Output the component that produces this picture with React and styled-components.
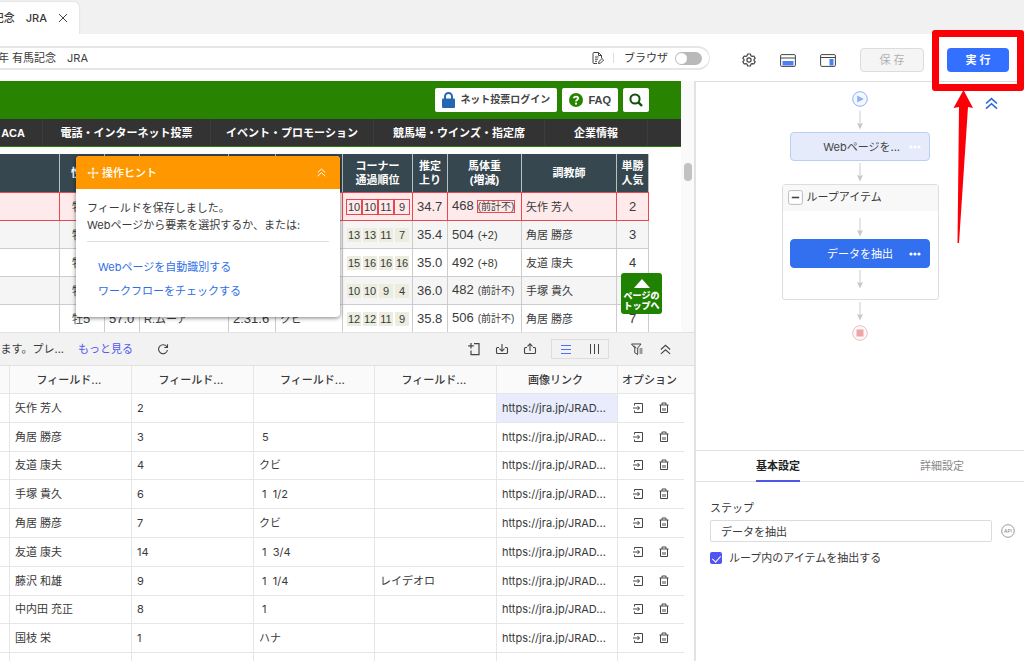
import React from 'react';
import styled, { createGlobalStyle, css } from 'styled-components';

const Global = createGlobalStyle`
  * { box-sizing: border-box; }
  body {
    margin: 0;
    background: #fff;
    color: #3a3a3a;
    font: 11px/16px Inter, "Noto Sans CJK JP", sans-serif;
    overflow: hidden;
  }
  button, input { font: inherit; color: inherit; }
`;

const Page = styled.div`
  display: flex;
  flex-direction: column;
  height: 100vh;
  position: relative;
  overflow: hidden;
`;

/* ---------- top tab strip and toolbar ---------- */
const TabStrip = styled.header`
  display: flex;
  align-items: flex-end;
  height: 34px;
  flex: none;
  background: #f1f1f1;
`;
const PageTab = styled.div`
  display: flex;
  align-items: center;
  height: 32px;
  padding-right: 10px;
  gap: 10px;
  background: #fff;
  border-radius: 0 5px 0 0;
  box-shadow: 0 0 2px #ccc;
  font-weight: 500;
`;
const Clipped = styled.span`
  display: flex;
  justify-content: flex-end;
  flex: none;
  width: ${(p) => p.$w}px;
  overflow: hidden;
  white-space: pre;
`;
const IconButton = styled.button`
  display: inline-flex;
  align-items: center;
  justify-content: center;
  flex: none;
  width: ${(p) => p.$w || 14}px;
  height: 16px;
  padding: 0;
  border: 0;
  background: none;
  color: ${(p) => p.$color || '#444'};
`;
const Toolbar = styled.div`
  display: flex;
  align-items: center;
  flex: none;
  height: 47px;
  padding: 5px 15px 0 0;
  background: #fff;
  position: relative;
`;
const AddressBar = styled.div`
  display: flex;
  align-items: center;
  flex: 1;
  height: 24px;
  margin-bottom: 4px;
  padding-right: 7px;
  border: solid #e6e6e6;
  border-width: 2px 1px 2px 0;
  border-radius: 0 12px 12px 0;
`;
const Push = styled.span`
  flex: 1;
`;
const Rule = styled.span`
  width: 1px;
  height: 10px;
  margin: 0 10px 0 8px;
  background: #ddd;
`;
const ToggleLabel = styled.label`
  display: flex;
  align-items: center;
  gap: 7px;
`;
const Toggle = styled.input.attrs({ type: 'checkbox' })`
  appearance: none;
  width: 27px;
  height: 13px;
  margin: 0;
  border-radius: 7px;
  background: #b9b9b9;
  &::after {
    content: '';
    display: block;
    width: 11px;
    height: 11px;
    margin: 1px;
    border-radius: 50%;
    background: #fff;
  }
`;
const ToolIcons = styled.div`
  display: flex;
  align-items: center;
  gap: 24px;
  padding: 0 24px 0 32px;
`;
const ActionButton = styled.button`
  width: ${(p) => (p.$primary ? 62 : 64)}px;
  height: 24px;
  padding: 0;
  border-radius: 4px;
  white-space: pre;
  ${(p) => (p.$primary
    ? css`
        margin-left: 23px;
        border: 0;
        background: #3370ff;
        color: #fff;
        font-weight: 600;
      `
    : css`
        border: 1px solid #dcdcdc;
        background: #f5f5f5;
        color: #b0b0b0;
      `)}
`;

/* ---------- body ---------- */
const Body = styled.main`
  display: grid;
  grid-template-columns: minmax(0, 1fr) 328px;
  flex: 1;
  min-height: 0;
`;
const Left = styled.div`
  display: flex;
  flex-direction: column;
  min-width: 0;
  border-right: 2px solid #e2e2e2;
`;

const Browser = styled.section`
  display: flex;
  flex: none;
  height: 251px;
  position: relative;
  overflow: hidden;
  font-family: "Liberation Sans", "Noto Sans CJK JP", sans-serif;
`;
const Site = styled.div`
  flex: 1;
  min-width: 0;
`;
const ScrollTrack = styled.div`
  width: 13px;
  padding: 82px 2px 0 3px;
  background: #fafafa;
`;
const ScrollThumb = styled.div`
  height: 18px;
  border-radius: 4px;
  background: #c2c2c2;
`;
const SiteHeader = styled.div`
  display: flex;
  align-items: center;
  justify-content: flex-end;
  gap: 5px;
  height: 38px;
  padding-right: 32px;
  background: #278300;
`;
const SiteButton = styled.button`
  display: flex;
  align-items: center;
  gap: 5px;
  height: 24px;
  padding: 0 ${(p) => p.$pad || 7}px;
  border: 0;
  border-radius: 2px;
  background: #fff;
  color: #444;
  font-size: ${(p) => p.$size || 11}px;
  font-weight: 700;
`;
const SiteNav = styled.nav`
  display: flex;
  height: 28px;
  border-bottom: 1px solid #278300;
  background: #333;
`;
const NavLink = styled.a`
  display: flex;
  align-items: center;
  justify-content: ${(p) => (p.$end ? 'flex-end' : 'center')};
  width: ${(p) => p.$w}px;
  padding-right: ${(p) => (p.$end ? 17 : 0)}px;
  overflow: hidden;
  border-right: 1px solid #3c3c3c;
  color: #fff;
  font-weight: 700;
  text-decoration: none;
  white-space: nowrap;
`;
const RaceTable = styled.table`
  width: 649px;
  margin-top: 7px;
  table-layout: fixed;
  border-collapse: separate;
  border-spacing: 0;
  th {
    height: 38px;
    padding: 0;
    border-right: 1px solid #b8c0c4;
    background: #36474f;
    color: #fff;
    line-height: 14px;
  }
`;
const RaceRow = styled.tr`
  height: ${(p) => (p.$hot ? 29 : 28)}px;
  background: ${(p) => (p.$hot ? '#feeaea' : p.$odd ? '#f5f5f5' : '#fff')};
  td {
    padding: 0 0 0 4px;
    border-right: 1px solid ${(p) => (p.$hot ? '#e8474f' : '#ccc')};
    border-bottom: 1px solid ${(p) => (p.$hot ? '#e8474f' : '#ccc')};
    ${(p) => p.$hot && 'border-top: 1px solid #e8474f;'}
    white-space: nowrap;
    overflow: hidden;
  }
`;
const Num = styled.span`
  font-size: 13px;
`;
const Diff = styled.span`
  font-size: ${(p) => (p.$small ? 10 : 11)}px;
  margin-left: 4px;
  ${(p) => p.$hot && 'outline: 1px solid #e8474f;'}
`;
const SexAge = styled.div`
  padding-left: 8px;
`;
const Centered = styled.div`
  text-align: center;
  padding-right: 4px;
`;
const Corners = styled.div`
  display: grid;
  grid-template-columns: repeat(4, 14px);
  gap: 2px;
`;
const Corner = styled.span`
  height: 14px;
  line-height: 14px;
  text-align: center;
  ${(p) => (p.$hot ? 'outline: 1px solid #e8474f;' : 'background: #ececdf;')}
`;
const TopButton = styled.button`
  display: flex;
  flex-direction: column;
  align-items: center;
  gap: 3px;
  position: absolute;
  right: 32px;
  top: 192px;
  width: 41px;
  height: 41px;
  padding: 6px 0 0;
  border: 0;
  border-radius: 3px;
  background: #1f8200;
  color: #fff;
  font-size: 9px;
  font-weight: 900;
  line-height: 10px;
  white-space: nowrap;
`;

/* ---------- hint popup ---------- */
const Hint = styled.aside`
  position: absolute;
  left: 76px;
  top: 75px;
  width: 264px;
  height: 161px;
  border-radius: 4px;
  overflow: hidden;
  background: #fff;
  box-shadow: 0 1px 4px rgba(0, 0, 0, 0.5);
  font-family: Inter, "Noto Sans CJK JP", sans-serif;
`;
const HintHead = styled.div`
  display: flex;
  align-items: center;
  gap: 3px;
  height: 33px;
  padding: 0 12px 0 11px;
  background: #ff9800;
  color: #fff;
  font-weight: 500;
`;
const HintBody = styled.div`
  padding: 11px 11px 0;
  line-height: 17px;
  white-space: nowrap;
  p { margin: 0; }
`;
const HintLinks = styled.div`
  display: flex;
  flex-direction: column;
  gap: 8px;
  margin-top: 7px;
  padding: 17px 11px 0;
  border-top: 1px solid #ddd;
  line-height: 16px;
`;
const Link = styled.a`
  color: ${(p) => p.$color || '#2f6fe4'};
  text-decoration: none;
`;

/* ---------- extracted data ---------- */
const DataBar = styled.div`
  display: flex;
  align-items: center;
  flex: none;
  height: 34px;
  padding: 0 22px 0 0;
  border: solid #e2e2e2;
  border-width: 1px 0;
  background: #f2f2f2;
`;
const BarTools = styled.div`
  display: flex;
  align-items: center;
  gap: 14px;
`;
const Reload = styled(IconButton)`
  margin-left: 24px;
`;
const Segment = styled.div`
  display: flex;
  align-items: center;
  justify-content: space-around;
  width: 58px;
  height: 20px;
  margin-right: 7px;
  border: 1px solid #ddd;
`;
const DataWrap = styled.div`
  flex: 1;
  min-height: 0;
  overflow: hidden;
`;
const DataTable = styled.table`
  width: 100%;
  height: 316px;
  table-layout: fixed;
  border-collapse: separate;
  border-spacing: 0;
  th, td {
    height: 28px;
    padding: 0 0 0 5px;
    border-bottom: 1px solid #e6e6e6;
    border-right: 1px solid #e6e6e6;
    text-align: left;
    white-space: pre;
    overflow: hidden;
  }
  th {
    padding: 0 3px 0 0;
    background: #fafafa;
    font-weight: 500;
    text-align: center;
  }
  th:nth-child(n + 7), td:nth-child(n + 7) { border-right: 0; }
  td:nth-child(8) { border-bottom: 0; }
`;
const LinkCell = styled.td`
  background: ${(p) => (p.$on ? '#e8ecfd' : 'transparent')};
`;
const RowTools = styled.div`
  display: flex;
  gap: 12px;
  padding-left: 8px;
`;

/* ---------- right side: workflow ---------- */
const Right = styled.div`
  display: flex;
  flex-direction: column;
  min-width: 0;
  border-top: 1px solid #ddd;
`;
const Flow = styled.section`
  display: flex;
  flex-direction: column;
  align-items: center;
  flex: none;
  gap: 2px;
  height: 368px;
  padding-top: 9px;
  position: relative;
`;
const FlowEnd = styled.div`
  display: flex;
  margin: ${(p) => (p.$start ? '0 0 2px' : '2px 0 0')};
`;
const FoldButton = styled(IconButton)`
  position: absolute;
  top: 13px;
  right: 26px;
`;
const Node = styled.button`
  display: flex;
  align-items: center;
  justify-content: flex-end;
  flex: none;
  width: 140px;
  height: 29px;
  padding: 0 8px;
  border: 1px solid ${(p) => (p.$active ? '#3370f0' : '#b9d0f5')};
  border-radius: 4px;
  background: ${(p) => (p.$active ? '#3370f0' : '#e6ebfc')};
  color: ${(p) => (p.$active ? '#fff' : '#444')};
  gap: ${(p) => (p.$active ? 16 : 9)}px;
`;
const Loop = styled.div`
  display: flex;
  flex-direction: column;
  align-items: center;
  gap: 2px;
  flex: none;
  width: 157px;
  height: 116px;
  border: 1px solid #ddd;
  border-radius: 3px;
`;
const LoopHead = styled.div`
  display: flex;
  align-items: center;
  align-self: stretch;
  gap: 4px;
  height: 26px;
  margin-bottom: 5px;
  padding: 0 0 2px 5px;
  background: #f8f8f8;
`;

/* ---------- right side: settings ---------- */
const SettingTabs = styled.div`
  display: grid;
  grid-template-columns: 1fr 1fr;
  justify-items: center;
  flex: none;
  height: 32px;
  border: solid #e2e2e2;
  border-width: 1px 0;
`;
const SettingTab = styled.button`
  height: 31px;
  padding: 0;
  border: 0;
  border-bottom: 2px solid ${(p) => (p.$on ? '#4f55e8' : 'transparent')};
  background: none;
  color: ${(p) => (p.$on ? '#222' : '#888')};
  font-weight: ${(p) => (p.$on ? 600 : 400)};
`;
const Form = styled.form`
  display: flex;
  flex-direction: column;
  padding: 18px 9px 0 14px;
`;
const Field = styled.div`
  display: flex;
  align-items: center;
  gap: 9px;
  margin: 4px 0 8px;
`;
const TextBox = styled.input`
  flex: 1;
  min-width: 0;
  height: 22px;
  padding: 0 10px;
  border: 1px solid #dcdcdc;
  border-radius: 2px;
  background: #fff;
`;
const CheckLabel = styled.label`
  display: flex;
  align-items: center;
  gap: 7px;
`;
const CheckBox = styled.input.attrs({ type: 'checkbox' })`
  appearance: none;
  display: flex;
  justify-content: center;
  width: 12px;
  height: 12px;
  margin: 0;
  border-radius: 2px;
  background: #4f55ee;
  &::after {
    content: '';
    width: 4px;
    height: 7px;
    margin-top: 2px;
    border: solid #fff;
    border-width: 0 1px 1px 0;
    transform: rotate(42deg);
  }
`;

/* ---------- red annotation ---------- */
const Marker = styled.div`
  position: absolute;
  top: 30px;
  right: 0;
  width: 92px;
  height: 61px;
  border: 7px solid #fb0007;
  border-radius: 3px;
  pointer-events: none;
`;
const MarkerArrow = styled.svg`
  position: absolute;
  top: 90px;
  right: 50px;
`;

/* ---------- icons ---------- */
const Svg = ({ w = 14, h = w, sw = 1, children, ...rest }) => (
  <svg width={w} height={h} viewBox={`0 0 ${w} ${h}`} fill="none" stroke="currentColor" strokeWidth={sw} aria-hidden="true" {...rest}>
    {children}
  </svg>
);
const CloseIcon = () => <Svg w={12}><path d="M2 2l8 8M10 2l-8 8" /></Svg>;
const NoteIcon = () => (
  <Svg w={14}>
    <path d="M6 12.5H3a1 1 0 0 1-1-1v-9a1 1 0 0 1 1-1h4.500l3 3V7M7.500 1.500v3h3M4 6h3.500M4 8.200h3M4 10.300h2M7.500 12.500l.4-1.900L11 7.500l1.600 1.500-3.100 3.100z" />
  </Svg>
);
const GearIcon = () => (
  <Svg w={14} sw={1.2}>
    <path d="M5.600 1h2.800l.5 1.700 1.200.7 1.700-.4L13.200 5.400 12 6.500v1.100l1.200 1.100-1.400 2.300-1.700-.4-1.200.7L8.400 13H5.600l-.5-1.700-1.200-.7-1.700.4L.8 8.700 2 7.600V6.500L.8 5.400 2.200 3l1.700.4 1.200-.7z" strokeLinejoin="round" />
    <circle cx="7" cy="7" r="2.100" />
  </Svg>
);
const PaneBottom = () => (
  <Svg w={16} h={13}>
    <rect x=".6" y=".6" width="14.800" height="11.800" rx="1.200" />
    <path d="M1 4h14" />
    <path d="M2.500 7h11v4.500h-11z" fill="#4a80f5" stroke="none" />
  </Svg>
);
const PaneRight = () => (
  <Svg w={16} h={13}>
    <rect x=".6" y=".6" width="14.800" height="11.800" rx="1.200" />
    <path d="M1 3.500h14" />
    <path d="M9.500 5h4v6.500h-4z" fill="#4a80f5" stroke="none" />
  </Svg>
);
const UpUp = ({ w = 10, sw = 1.1 }) => (
  <svg width={w} height={w} viewBox="0 0 10 10" fill="none" stroke="currentColor" strokeWidth={sw} aria-hidden="true">
    <path d="M.8 5L5 1.200 9.200 5M.8 9L5 5.200 9.200 9" />
  </svg>
);
const MoveIcon = () => (
  <Svg w={12}>
    <path d="M6 1.500v9M1.500 6h9" />
    <path d="M6 .3l1.600 2H4.400zM6 11.700l1.600-2H4.400zM.3 6l2-1.600v3.200zM11.700 6l-2-1.600v3.200z" fill="currentColor" stroke="none" />
  </Svg>
);
const LockIcon = () => (
  <Svg w={13} h={16} sw={2}>
    <path d="M3 8V4.500a3.500 3.500 0 0 1 7 0V8" stroke="#2468b4" />
    <rect x="0" y="6.500" width="13" height="9.500" rx="1" fill="#2468b4" stroke="none" />
  </Svg>
);
const HelpIcon = () => (
  <Svg w={14}>
    <circle cx="7" cy="7" r="7" fill="#278300" stroke="none" />
    <path d="M4.800 5.300C4.900 3 9.300 3 9.200 5.400 9.100 6.800 7 6.800 7 8.500" stroke="#fff" strokeWidth="1.800" />
    <circle cx="7" cy="10.700" r="1.100" fill="#fff" stroke="none" />
  </Svg>
);
const SearchIcon = () => (
  <Svg w={14} sw={2}><circle cx="6" cy="6" r="4.600" stroke="#14520a" /><path d="M9.200 9.200l3.800 3.800" stroke="#14520a" strokeWidth="2.400" /></Svg>
);
const RefreshIcon = () => (
  <Svg w={12} sw={1.100}><path d="M10 4A4.500 4.500 0 1 0 10.500 7M10.500 1.200V4.500H7.300" /></Svg>
);
const AddFileIcon = () => (
  <Svg w={14} sw={1.200}><path d="M7 1.700H12v11H4V8.500M4 1v5.500M1.200 3.800h5.600" /></Svg>
);
const TrayIcon = ({ up }) => (
  <Svg w={14} sw={1.100}>
    <path d="M4 5.500H2.500a1 1 0 0 0-1 1v4a1 1 0 0 0 1 1h9a1 1 0 0 0 1-1v-4a1 1 0 0 0-1-1H10M7 2v7" />
    <path d={up ? 'M4.500 4.300L7 1.800l2.500 2.500' : 'M4.500 6.700L7 9.200l2.500-2.500'} />
  </Svg>
);
const FilterIcon = () => (
  <Svg w={14}><path d="M1.500 2h9.500L7.700 6v6.500L4.800 10.800V6zM4 3.500l2.300 2.800M9.500 7h3M9.500 9h3M9.500 11h3" /></Svg>
);
const RowsIcon = () => <Svg w={12}><path d="M1 2.500h10M1 6.500h10M1 10.500h10" /></Svg>;
const ColsIcon = () => <Svg w={12}><path d="M2.500 1v10M6.500 1v10M10.500 1v10" /></Svg>;
const EnterIcon = () => (
  <Svg w={12}><path d="M2.500 3.500v-2h8v9h-8v-2M1 6h6.500M5.500 4l2 2-2 2" /></Svg>
);
const TrashIcon = () => (
  <Svg w={10} h={12}><path d="M.5 3h9M3 2.800V1h4v1.800M1.500 3v7.500h7V3M4 6V9M6 6V9" /></Svg>
);
const Dots = () => (
  <Svg w={12} h={4}><g fill="#fff" stroke="none"><circle cx="2" cy="2" r="1.600" /><circle cx="6" cy="2" r="1.600" /><circle cx="10" cy="2" r="1.600" /></g></Svg>
);
const FlowArrow = () => (
  <Svg w={8} h={19}>
    <path d="M4 0v14" stroke="#ccc" /><path d="M1 12l3 1 3-1-3 6.500z" fill="#c8c8c8" stroke="none" />
  </Svg>
);
const StartIcon = () => (
  <Svg w={16}><circle cx="8" cy="8" r="7.300" stroke="#8fb1f5" fill="#f3f7ff" /><path d="M5.200 4.500L11.800 8l-6.600 3.500z" fill="#8fb1f5" stroke="none" /></Svg>
);
const StopIcon = () => (
  <Svg w={16}><circle cx="8" cy="8" r="7.300" stroke="#eebcbc" fill="#fff8f8" /><path d="M4.500 4.500h7v7h-7z" fill="#eda5a5" stroke="none" /></Svg>
);
const MinusBox = () => (
  <Svg w={15}><rect x=".6" y=".6" width="13.800" height="13.800" rx="2" fill="#fff" stroke="#bbb" /><path d="M3.800 7.500h7.400" stroke="#444" strokeWidth="1.600" /></Svg>
);
const ApiText = styled.text`
  font: 5px Inter, sans-serif;
  fill: #888;
`;
const ApiIcon = () => (
  <Svg w={14}><circle cx="7" cy="7" r="6.300" stroke="#999" /><ApiText x="7" y="9" textAnchor="middle" stroke="none">API</ApiText></Svg>
);

/* ---------- data ---------- */
const races = [
  { corners: [10, 10, 11, 9], up: '34.7', kg: '468', diff: '(前計不)', who: '矢作 芳人', pop: 2 },
  { corners: [13, 13, 11, 7], up: '35.4', kg: '504', diff: '(+2)', who: '角居 勝彦', pop: 3 },
  { corners: [15, 16, 16, 16], up: '35.0', kg: '492', diff: '(+8)', who: '友道 康夫', pop: 4 },
  { corners: [10, 10, 9, 4], up: '36.0', kg: '482', diff: '(前計不)', who: '手塚 貴久', pop: '' },
  { corners: [12, 12, 11, 9], up: '35.8', kg: '506', diff: '(前計不)', who: '角居 勝彦', pop: 7, age: 5, load: '57.0', rider: 'R.ムーア', time: '2:31.6', gap: 'クビ' },
];
const raceCols = [60, 45, 35, 89, 47, 67, 70, 35, 74, 95, 32];
const fields = [
  ['矢作 芳人', '2', '', ''],
  ['角居 勝彦', '3', ' 5', ''],
  ['友道 康夫', '4', 'クビ', ''],
  ['手塚 貴久', '6', ' 1  1/2', ''],
  ['角居 勝彦', '7', 'クビ', ''],
  ['友道 康夫', '14', ' 1  3/4', ''],
  ['藤沢 和雄', '9', ' 1  1/4', 'レイデオロ'],
  ['中内田 充正', '8', ' 1', ''],
  ['国枝 栄', '1', 'ハナ', ''],
];
const dataCols = [10, 122, 122, 121, 122, 121];

const Race = ({ row, hot, odd }) => (
  <RaceRow $hot={hot} $odd={odd}>
    <td />
    <td><SexAge>牡<Num>{row.age}</Num></SexAge></td>
    <td><Num>{row.load}</Num></td>
    <td>{row.rider}</td>
    <td><Num>{row.time}</Num></td>
    <td>{row.gap}</td>
    <td>
      <Corners>{row.corners.map((c, i) => <Corner key={i} $hot={hot}>{c}</Corner>)}</Corners>
    </td>
    <td><Num>{row.up}</Num></td>
    <td><Num>{row.kg}</Num><Diff $small={row.diff.length > 4} $hot={hot}>{row.diff}</Diff></td>
    <td>{row.who}</td>
    <td><Centered><Num>{row.pop}</Num></Centered></td>
  </RaceRow>
);

export default function App() {
  return (
    <Page>
      <Global />
      <TabStrip>
        <PageTab>
          <Clipped $w={47}>記念　JRA</Clipped>
          <IconButton $w={12} aria-label="閉じる"><CloseIcon /></IconButton>
        </PageTab>
      </TabStrip>
      <Toolbar>
        <AddressBar>
          <Clipped $w={88}>年 有馬記念　JRA</Clipped>
          <Push />
          <IconButton aria-label="編集"><NoteIcon /></IconButton>
          <Rule />
          <ToggleLabel>ブラウザ<Toggle /></ToggleLabel>
        </AddressBar>
        <ToolIcons>
          <IconButton aria-label="設定"><GearIcon /></IconButton>
          <IconButton $w={16} aria-label="下パネル"><PaneBottom /></IconButton>
          <IconButton $w={16} aria-label="右パネル"><PaneRight /></IconButton>
        </ToolIcons>
        <ActionButton disabled>保 存</ActionButton>
        <ActionButton $primary>実 行</ActionButton>
      </Toolbar>

      <Body>
        <Left>
          <Browser>
            <Site>
              <SiteHeader>
                <SiteButton $size={10}><LockIcon />ネット投票ログイン</SiteButton>
                <SiteButton><HelpIcon />FAQ</SiteButton>
                <SiteButton $pad={6} aria-label="検索"><SearchIcon /></SiteButton>
              </SiteHeader>
              <SiteNav>
                <NavLink href="#" $w={43} $end>ACA</NavLink>
                <NavLink href="#" $w={168}>電話・インターネット投票</NavLink>
                <NavLink href="#" $w={163}>イベント・プロモーション</NavLink>
                <NavLink href="#" $w={171}>競馬場・ウインズ・指定席</NavLink>
                <NavLink href="#" $w={103}>企業情報</NavLink>
              </SiteNav>
              <RaceTable>
                <colgroup>{raceCols.map((w, i) => <col key={i} width={w} />)}</colgroup>
                <thead>
                  <tr>
                    <th /><th>性齢</th><th /><th /><th /><th />
                    <th>コーナー<br />通過順位</th>
                    <th>推定<br />上り</th>
                    <th>馬体重<br />(増減)</th>
                    <th>調教師</th>
                    <th>単勝<br />人気</th>
                  </tr>
                </thead>
                <tbody>
                  {races.map((r, i) => <Race key={i} row={r} hot={i === 0} odd={i % 2 === 1} />)}
                </tbody>
              </RaceTable>
            </Site>
            <ScrollTrack><ScrollThumb /></ScrollTrack>
            <TopButton>
              <Svg w={16} h={9}><path d="M8 0l8 9H0z" fill="#fff" stroke="none" /></Svg>
              <span>ページの<br />トップへ</span>
            </TopButton>
            <Hint>
              <HintHead>
                <MoveIcon />操作ヒント<Push />
                <IconButton $color="#fff" aria-label="たたむ"><UpUp w={9} /></IconButton>
              </HintHead>
              <HintBody>
                <p>フィールドを保存しました。</p>
                <p>Webページから要素を選択するか、または:</p>
                <HintLinks>
                  <Link href="#">Webページを自動識別する</Link>
                  <Link href="#">ワークフローをチェックする</Link>
                </HintLinks>
              </HintBody>
            </Hint>
          </Browser>

          <DataBar>
            <BarTools>
              <Clipped $w={64}>ます。プレ...</Clipped>
              <Link href="#" $color="#5158f0">もっと見る</Link>
            </BarTools>
            <Reload $w={12} aria-label="更新"><RefreshIcon /></Reload>
            <Push />
            <BarTools>
              <IconButton aria-label="フィールド追加"><AddFileIcon /></IconButton>
              <IconButton aria-label="取り込み"><TrayIcon /></IconButton>
              <IconButton aria-label="書き出し"><TrayIcon up /></IconButton>
              <Segment>
                <IconButton $color="#4f6ff5" aria-label="行表示"><RowsIcon /></IconButton>
                <IconButton aria-label="列表示"><ColsIcon /></IconButton>
              </Segment>
              <IconButton aria-label="フィルター"><FilterIcon /></IconButton>
              <IconButton aria-label="たたむ"><UpUp w={11} sw={1} /></IconButton>
            </BarTools>
          </DataBar>

          <DataWrap>
            <DataTable>
              <colgroup>
                {dataCols.map((w, i) => <col key={i} width={w} />)}
                <col /><col width="10" />
              </colgroup>
              <thead>
                <tr>
                  <th /><th>フィールド...</th><th>フィールド...</th><th>フィールド...</th><th>フィールド...</th>
                  <th>画像リンク</th><th>オプション</th><th />
                </tr>
              </thead>
              <tbody>
                {fields.map((cells, i) => (
                  <tr key={i}>
                    <td />
                    {cells.map((c, j) => <td key={j}>{c}</td>)}
                    <LinkCell $on={i === 0}>https://jra.jp/JRAD...</LinkCell>
                    <td>
                      <RowTools>
                        <IconButton aria-label="開く"><EnterIcon /></IconButton>
                        <IconButton aria-label="削除"><TrashIcon /></IconButton>
                      </RowTools>
                    </td>
                    <td />
                  </tr>
                ))}
                <tr><td /><td /><td /><td /><td /><td /><td /><td /></tr>
              </tbody>
            </DataTable>
          </DataWrap>
        </Left>

        <Right>
          <Flow>
            <FoldButton $color="#2b68d8" aria-label="たたむ"><UpUp w={13} sw={1.2} /></FoldButton>
            <FlowEnd $start><StartIcon /></FlowEnd>
            <FlowArrow />
            <Node>Webページを...<Dots /></Node>
            <FlowArrow />
            <Loop>
              <LoopHead><MinusBox />ループアイテム</LoopHead>
              <FlowArrow />
              <Node $active>データを抽出<Dots /></Node>
              <FlowArrow />
            </Loop>
            <FlowArrow />
            <FlowEnd><StopIcon /></FlowEnd>
          </Flow>
          <SettingTabs>
            <SettingTab $on>基本設定</SettingTab>
            <SettingTab>詳細設定</SettingTab>
          </SettingTabs>
          <Form>
            <label htmlFor="step">ステップ</label>
            <Field>
              <TextBox id="step" defaultValue="データを抽出" />
              <ApiIcon />
            </Field>
            <CheckLabel><CheckBox defaultChecked />ループ内のアイテムを抽出する</CheckLabel>
          </Form>
        </Right>
      </Body>

      <Marker />
      <MarkerArrow width="22" height="154" viewBox="0 0 22 154" aria-hidden="true">
        <path d="M11.500 0L21 18l-5-1L7 153H5.500L7 17l-5.500 1z" fill="#fb0007" />
      </MarkerArrow>
    </Page>
  );
}
